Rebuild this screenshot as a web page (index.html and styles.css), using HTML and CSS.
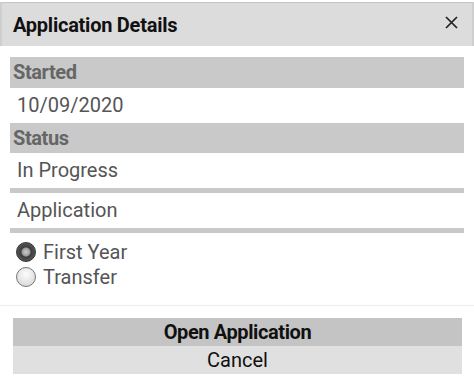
FILE: index.html
```html
<!DOCTYPE html>
<html lang="en">
<head>
    <meta charset="UTF-8">
    <meta name="viewport" content="width=device-width, initial-scale=1.0">
    <title>Application Details</title>
    <link rel="stylesheet" href="styles.css">
</head>
<body>
    <div class="dialog">
        <div class="header">
            <h2>Application Details</h2>
            <svg class="close" width="13" height="13" viewBox="0 0 13 13">
                <path d="M1 1 L12 12 M12 1 L1 12" stroke="#222" stroke-width="1.7" fill="none"/>
            </svg>
        </div>
        <div class="content">
            <div class="label">Started</div>
            <div class="value">10/09/2020</div>
            <div class="label status">Status</div>
            <div class="value">In Progress</div>
            <div class="sep"></div>
            <div class="value">Application</div>
            <div class="sep"></div>
            <div class="radios">
                <label class="radio"><span class="dot checked"></span>First Year</label>
                <label class="radio"><span class="dot"></span>Transfer</label>
            </div>
        </div>
        <div class="footer">
            <button class="btn primary">Open Application</button>
            <button class="btn">Cancel</button>
        </div>
    </div>
</body>
</html>
```
FILE: styles.css
```css
body {
    margin: 0;
    background-color: white;
    font-family: Roboto, "DejaVu Sans Condensed", sans-serif;
}
.dialog {
    padding-top: 2px;
}
.header {
    display: flex;
    align-items: center;
    justify-content: space-between;
    height: 43px;
    background-color: #dcdcdc;
    border-top: 1px solid #c4c4c4;
    border-left: 2px solid #cfcfcf;
    border-right: 2px solid #cfcfcf;
    padding: 0 14px 0 11px;
}
.header h2 {
    margin: 0;
    font-size: 20px;
    font-weight: bold;
    letter-spacing: -0.25px;
    color: #111;
}
.close {
    margin-top: -5px;
}
.content {
    margin: 11px 10px 0 10px;
}
.label {
    height: 31px;
    line-height: 31px;
    background-color: #c9c9c9;
    color: #666;
    font-size: 20px;
    font-weight: bold;
    letter-spacing: -0.4px;
    padding-left: 3px;
}
.label.status {
    height: 30px;
    line-height: 30px;
}
.value {
    height: 35px;
    line-height: 35px;
    color: #555;
    font-size: 20px;
    padding-left: 7px;
}
.sep {
    height: 5px;
    background-color: #c9c9c9;
}
.radios {
    padding: 6px 0 0 6px;
}
.radio {
    display: flex;
    align-items: center;
    height: 25px;
    font-size: 20px;
    color: #555;
}
.dot {
    width: 20px;
    height: 20px;
    border-radius: 50%;
    border: 1px solid #777;
    background: radial-gradient(circle at 50% 35%, #fdfdfd, #d0d0d0);
    margin-right: 7px;
    box-sizing: border-box;
}
.dot.checked {
    border-color: #333;
    background: radial-gradient(circle, #cfcfcf 0, #9a9a9a 4px, #3c3c3c 5px, #555 9px);
}
.footer {
    margin-top: 16px;
    border-top: 1px solid #ececec;
    padding: 12px 12px 0 13px;
}
.btn {
    display: block;
    width: 100%;
    height: 28px;
    border: none;
    font-family: inherit;
    font-size: 20px;
    color: #111;
    background-color: #e0e0e0;
    padding: 0;
}
.btn.primary {
    background-color: #c4c4c4;
    font-weight: bold;
    letter-spacing: -0.4px;
}
```
